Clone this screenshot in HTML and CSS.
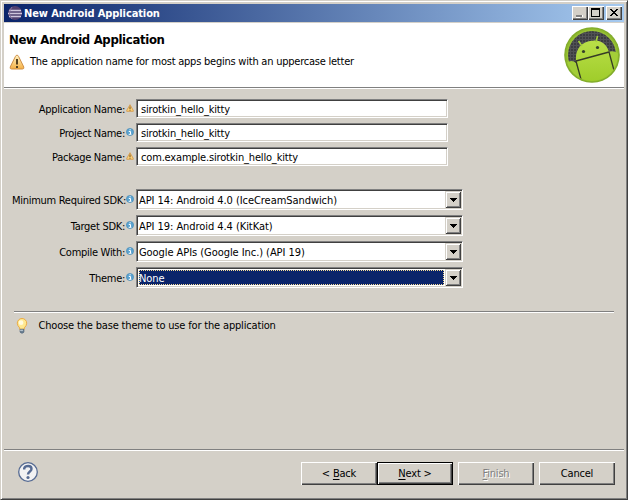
FILE: index.html
```html
<!DOCTYPE html>
<html lang="en">
<head>
<meta charset="utf-8">
<title>New Android Application</title>
<link rel="stylesheet" href="styles.css">
</head>
<body>
<svg class="defs" width="0" height="0" aria-hidden="true">
  <defs>
    <linearGradient id="amber" x2="0" y2="1"><stop stop-color="#fff3c4"/><stop offset="1" stop-color="#f5b044"/></linearGradient>
    <linearGradient id="green" x2="0" y2="1"><stop stop-color="#b9df48"/><stop offset="1" stop-color="#9dcb28"/></linearGradient>
    <radialGradient id="ring"><stop offset=".85" stop-color="#a3cd38"/><stop offset="1" stop-color="#7ba626"/></radialGradient>
    <pattern id="mesh" width="3" height="3" patternUnits="userSpaceOnUse"><rect width="3" height="3" fill="#3c3d41"/><path d="M0 .5h3M.5 0v3" stroke="#505155"/></pattern>
    <symbol id="warn" viewBox="0 0 16 16"><path d="M8 1.2 Q9 1.2 9.5 2.3 L14.8 13 Q15.2 15 13.5 15 H2.500 Q.8 15 1.200 13 L6.500 2.300 Q7 1.200 8 1.200Z" fill="url(#amber)" stroke="#d08f45"/><path d="M8 5v5.500M8 12v2" stroke="#54401f" stroke-width="2"/></symbol>
    <symbol id="warn-small" viewBox="0 0 8 8"><path d="M4 .7 7.300 6.500V7.300H.7V6.500Z" fill="#fbd27b" stroke="#d39443" stroke-width=".8" stroke-linejoin="round"/><path d="M4 2.500v2.500M4 5.700v1" stroke="#6b4a18"/></symbol>
    <symbol id="info" viewBox="0 0 8 8"><circle cx="4" cy="4" r="3.600" fill="#5ba3d0" stroke="#4186b4" stroke-width=".6"/><path d="M2.800 3.500h1.700V6M2.700 6.300h2.700M3.500 1.800h1.200" fill="none" stroke="#fff"/></symbol>
  </defs>
</svg>
<div class="window">
  <div class="titlebar">
    <svg class="app" viewBox="0 0 16 16"><circle cx="8" cy="8" r="7" fill="#514070"/><path d="M2 5.500h12M1 8.500h14M2 11.500h12" stroke="#cfc5dc" stroke-width="1.300"/><path d="M5 2Q0 8 5 14" fill="none" stroke="#8776a0"/></svg>
    <span class="title">New Android Application</span>
    <div class="controls">
      <div class="ctl"><svg viewBox="0 0 16 14"><path d="M4 9h6v2H4z" fill="#808080"/><path d="M4 11h7v-2h-1v2H4v1h7z" fill="#fff"/></svg></div>
      <div class="ctl"><svg viewBox="0 0 16 14"><path d="M3 2h9v9H3zM4 4v6h7V4z" fill="#000" fill-rule="evenodd"/></svg></div>
      <div class="ctl close"><svg viewBox="0 0 16 14"><path d="M4 3h2v1h1v1h2V4h1V3h2v1h-1v1h-1v1H9v1h1v1h1v1h1v1h-2V9H9V8H7v1H6v1H4V9h1V8h1V7h1V6H6V5H5V4H4z"/></svg></div>
    </div>
  </div>
  <header class="banner">
    <div class="banner-copy">
      <h1><span>New Android Application</span></h1>
      <div class="message"><svg class="warn-lg"><use href="#warn"/></svg><span class="message-text">The application name for most apps begins with an uppercase letter</span></div>
    </div>
    <svg class="android" viewBox="0 0 56 56">
      <circle cx="28" cy="28" r="27.800" fill="url(#ring)"/>
      <circle cx="28" cy="28" r="24" fill="url(#mesh)"/>
      <clipPath id="disk"><circle cx="28" cy="28" r="26"/></clipPath>
      <g clip-path="url(#disk)">
        <path d="M12 34C11 22 17 16 26 14C36 12 42 16 45 25L52 48 37 58H16z" fill="url(#green)"/>
        <path d="M0 38Q7 31 12 36L18 58H0zM45 25Q49 23 56 27V54L48 50z" fill="#a3ce38"/>
        <path d="M12 34 45 25M12 34 18 56M45 25 51 47" fill="none" stroke="#363c26" stroke-width="1.300"/>
        <path d="m14.500 14 3.500 5M33.500 9 32 15" stroke="#a5d038" stroke-width="1.500"/>
        <circle cx="19.500" cy="24.500" r="1.600" fill="#35402b"/><circle cx="33.500" cy="20.500" r="1.600" fill="#35402b"/>
      </g>
    </svg>
  </header>
  <main class="content">
    <div class="fields">
      <div class="row"><label>Application Name:</label><svg class="mark"><use href="#warn-small"/></svg><div class="input"><span>sirotkin_hello_kitty</span></div></div>
      <div class="row"><label>Project Name:</label><svg class="mark"><use href="#info"/></svg><div class="input"><span>sirotkin_hello_kitty</span></div></div>
      <div class="row"><label>Package Name:</label><svg class="mark"><use href="#warn-small"/></svg><div class="input"><span>com.example.sirotkin_hello_kitty</span></div></div>
    </div>
    <div class="selects">
      <div class="row"><label>Minimum Required SDK:</label><svg class="mark"><use href="#info"/></svg><div class="combo"><span class="value">API 14: Android 4.0 (IceCreamSandwich)</span><i class="drop"></i></div></div>
      <div class="row"><label>Target SDK:</label><svg class="mark"><use href="#info"/></svg><div class="combo"><span class="value">API 19: Android 4.4 (KitKat)</span><i class="drop"></i></div></div>
      <div class="row"><label>Compile With:</label><svg class="mark"><use href="#info"/></svg><div class="combo"><span class="value">Google APIs (Google Inc.) (API 19)</span><i class="drop"></i></div></div>
      <div class="row"><label>Theme:</label><svg class="mark"><use href="#info"/></svg><div class="combo"><span class="value selected">None</span><i class="drop"></i></div></div>
    </div>
    <div class="hint">
      <svg class="bulb" viewBox="0 0 12 17"><path d="M3.500 10.500Q1 8 1 5.500A5 5 0 0 1 11 5.500Q11 8 8.500 10.500V12h-5z" fill="#ffe991" stroke="#eaa83f"/><circle cx="5" cy="5" r="2.500" fill="#fffbe0"/><path d="M4 12h4v3l-1 1H5l-1-1z" fill="#6d8193" stroke="#50657b" stroke-width=".8"/><path d="M4 13h3" stroke="#d4e0e8"/></svg>
      <span>Choose the base theme to use for the application</span>
    </div>
  </main>
  <footer>
    <svg class="help" viewBox="0 0 20 20"><circle cx="10" cy="10" r="9.300" fill="#f2f2f3" stroke="#566b93" stroke-width="1.300"/><path d="M6.200 7.500V6.300Q7 4 10.200 4 13.500 4 13.500 7C13.500 9.500 10 9.500 10 12.500" fill="none" stroke="#566b93" stroke-width="2.400"/><circle cx="10" cy="15.500" r="1.600" fill="#566b93"/></svg>
    <div class="button back"><span>&lt; <u>B</u>ack</span></div>
    <div class="button next"><span><u>N</u>ext &gt;</span></div>
    <div class="button finish"><span><u>F</u>inish</span></div>
    <div class="button cancel"><span>Cancel</span></div>
  </footer>
</div>
</body>
</html>
```
FILE: styles.css
```css
* { box-sizing: border-box; }
body { margin: 0; background: #d4d0c8; font: 11px/13px "DejaVu Sans Condensed", "DejaVu Sans", sans-serif; font-stretch: condensed; color: #000; }
.defs { position: absolute; }
svg { display: block; flex: none; }
.window { width: 628px; height: 500px; display: flex; flex-direction: column; border: 1px solid; border-color: #d4d0c8 #404040 #404040 #d4d0c8; box-shadow: inset 1px 1px #fff, inset -1px -1px #808080; padding: 3px; overflow: hidden; white-space: nowrap; }
.titlebar { height: 18px; flex: none; display: flex; align-items: center; padding: 0 2px; background: linear-gradient(90deg, #0a246a, #a6caf0); color: #fff; font-weight: bold; letter-spacing: -.1px; }
.app { width: 16px; height: 16px; margin: 0 1px 0 1px; }
.title { flex: 1; }
.controls { display: flex; }
.ctl { width: 16px; height: 14px; background: #d4d0c8; box-shadow: inset 1px 1px #fff, inset -1px -1px #404040, inset -2px -2px #808080; }
.ctl svg { width: 16px; height: 14px; shape-rendering: crispEdges; }
.close { margin-left: 2px; }
.banner { height: 66px; flex: none; display: flex; justify-content: space-between; margin-top: 1px; padding: 4px 4px 0 5px; background: #fff; border-bottom: 1px solid #fff; box-shadow: inset 0 -1px #808080; }
h1 { margin: 5px 0 8px; font-size: 13px; line-height: 15px; letter-spacing: -.33px; }
.message { display: flex; letter-spacing: -.23px; }
.warn-lg { width: 16px; height: 16px; margin: -1px 5px 0 0; }
.android { width: 56px; height: 56px; }
.content { flex: 1; padding: 10px 10px 0; }
.row { display: flex; align-items: center; margin-left: -2px; }
label { width: 113px; padding-top: 1px; text-align: right; letter-spacing: -.28px; }
.mark { width: 8px; height: 8px; margin: -1px 2px 0 1px; }
.fields { display: grid; gap: 5px; }
.input { width: 312px; height: 19px; padding: 3px 4px; letter-spacing: -.17px; }
.input, .combo { background: #fff; border: 1px solid; border-color: #808080 #fff #fff #808080; box-shadow: inset 1px 1px #404040, inset -1px -1px #d4d0c8; }
.selects { display: grid; gap: 5px; margin-top: 23px; }
.combo { width: 327px; height: 21px; display: flex; padding: 1px; letter-spacing: -.06px; }
.value { flex: 1; padding: 3px 1px; }
.selected { background: #0a246a; color: #fff; margin: 1px; padding: 2px 0; outline: 1px dotted #f5db95; outline-offset: -1px; }
.drop { width: 16px; background: linear-gradient(#000, #000) 5px 7px / 7px 1px no-repeat, linear-gradient(#000, #000) 6px 8px / 5px 1px no-repeat, linear-gradient(#000, #000) 7px 9px / 3px 1px no-repeat, linear-gradient(#000, #000) 8px 10px / 1px 1px no-repeat, #d4d0c8; box-shadow: inset 1px 1px #d4d0c8, inset -1px -1px #404040, inset 2px 2px #fff, inset -2px -2px #808080; }
.hint { display: flex; margin-top: 23px; border-top: 1px solid #808080; box-shadow: inset 0 1px #fff; padding: 7px 0 0 3px; letter-spacing: -.17px; }
.bulb { width: 12px; height: 16px; margin: -1px 10.5px 0 -1px; }
footer { height: 47px; flex: none; display: flex; border-top: 1px solid #808080; box-shadow: inset 0 1px #fff; padding: 12px 9px 0 14px; letter-spacing: -.2px; }
.help { width: 20px; height: 20px; margin-right: auto; }
.button { width: 76px; height: 23px; display: flex; justify-content: center; padding-top: 5px; box-shadow: inset 1px 1px #fff, inset -1px -1px #404040, inset -2px -2px #808080; }
.next { border: 1px solid #000; padding-top: 4px; }
.finish { margin: 0 5px; color: #808080; text-shadow: 1px 1px #fff; }
u { text-underline-offset: 2px; }
```
